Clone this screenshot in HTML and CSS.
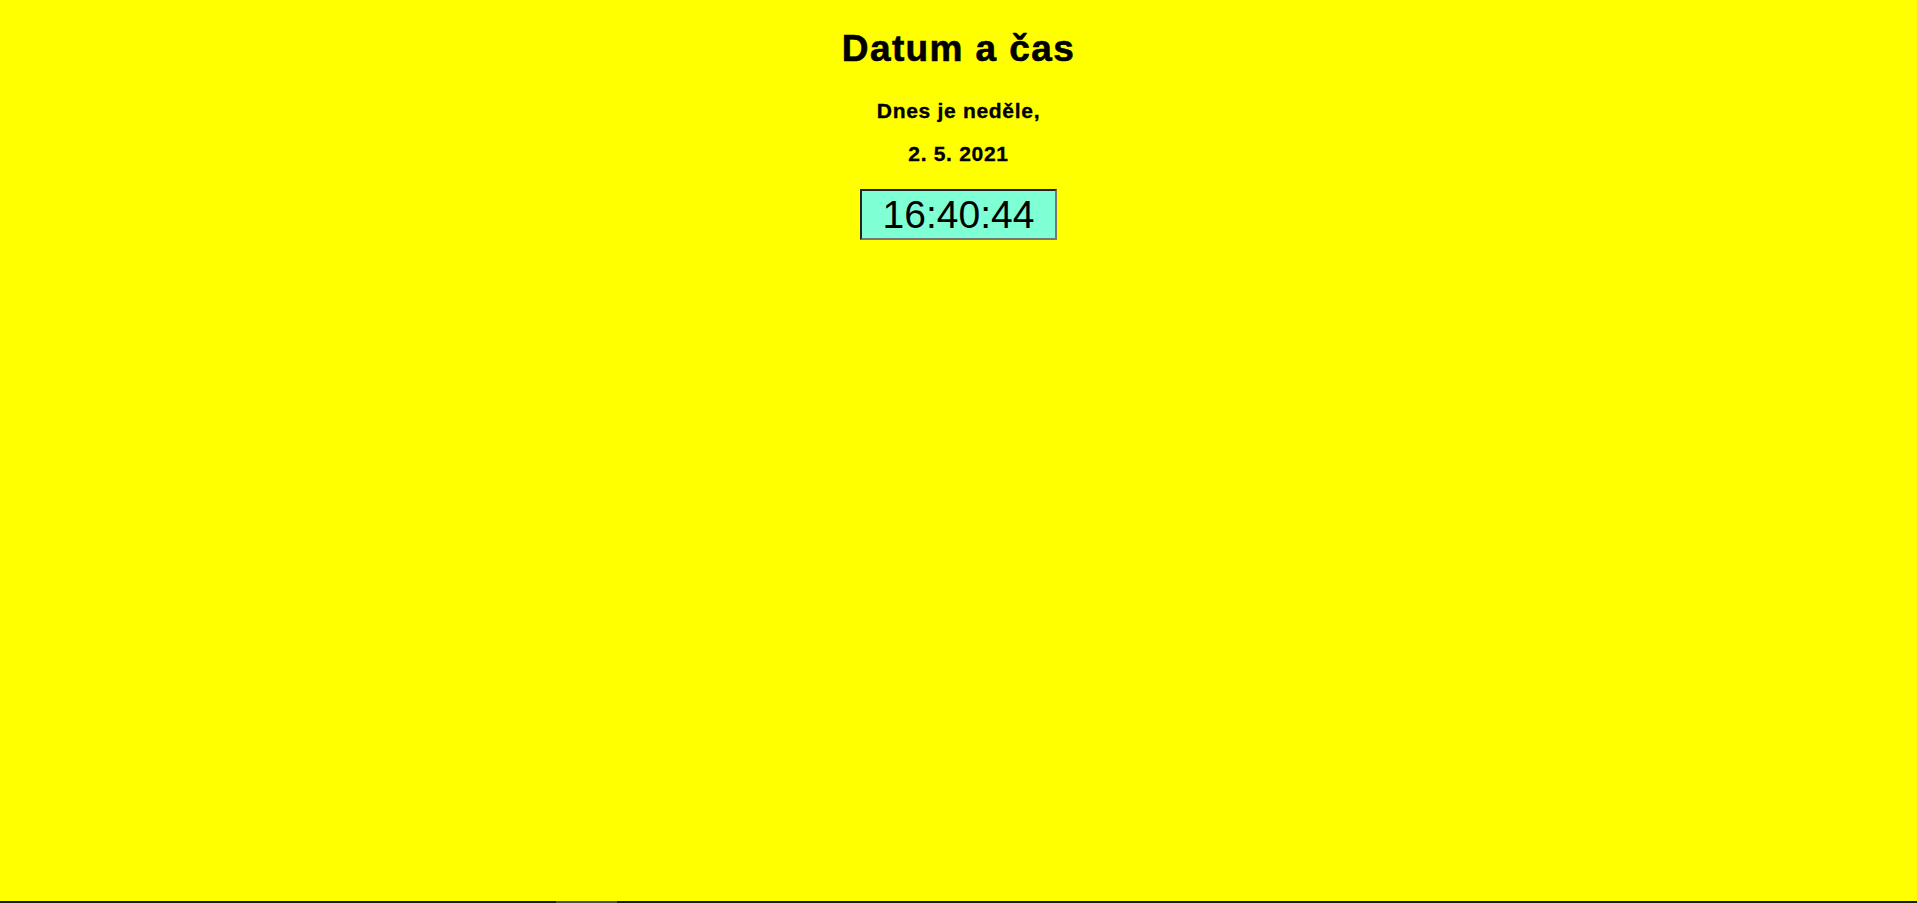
FILE: index.html
```html
<!DOCTYPE html>
<html lang="cs">
<head>
<meta charset="utf-8">
<title>Datum a čas</title>
<link rel="stylesheet" href="styles.css">
</head>
<body>
<main class="page">
  <h1 class="title">Datum a čas</h1>
  <p class="line">Dnes je neděle,</p>
  <p class="line">2. 5. 2021</p>
  <div class="clock">16:40:44</div>
</main>
<div class="bottom-bar"><span class="bottom-thumb"></span></div>
</body>
</html>
```

FILE: styles.css
```css
html, body {
  margin: 0;
  padding: 0;
  height: 100%;
}
body {
  background: #ffff00;
  color: #000;
  font-family: "Liberation Sans", Arial, sans-serif;
  overflow: hidden;
}
.page {
  display: flex;
  flex-direction: column;
  align-items: center;
  padding-top: 29px;
}
.title {
  margin: 0;
  font-size: 37px;
  line-height: 40px;
  font-weight: bold;
  letter-spacing: 1.4px;
  -webkit-text-stroke: 0.6px #000;
}
.line {
  margin: 30px 0 0;
  font-size: 21px;
  line-height: 24px;
  font-weight: bold;
  letter-spacing: 0.7px;
  -webkit-text-stroke: 0.35px #000;
}
.line + .line {
  margin-top: 19px;
}
.clock {
  margin-top: 23px;
  width: 193px;
  height: 47px;
  box-sizing: content-box;
  background: #7fffd4;
  border: 2px solid;
  border-color: #222 #777 #777 #222;
  font-size: 39px;
  line-height: 47px;
  text-align: center;
}
.bottom-bar {
  position: fixed;
  left: 0;
  right: 0;
  bottom: 0;
  height: 2px;
  background: #1c1c1c;
}
.bottom-thumb {
  position: absolute;
  left: 556px;
  width: 61px;
  top: 0;
  bottom: 0;
  background: #505050;
}
```
